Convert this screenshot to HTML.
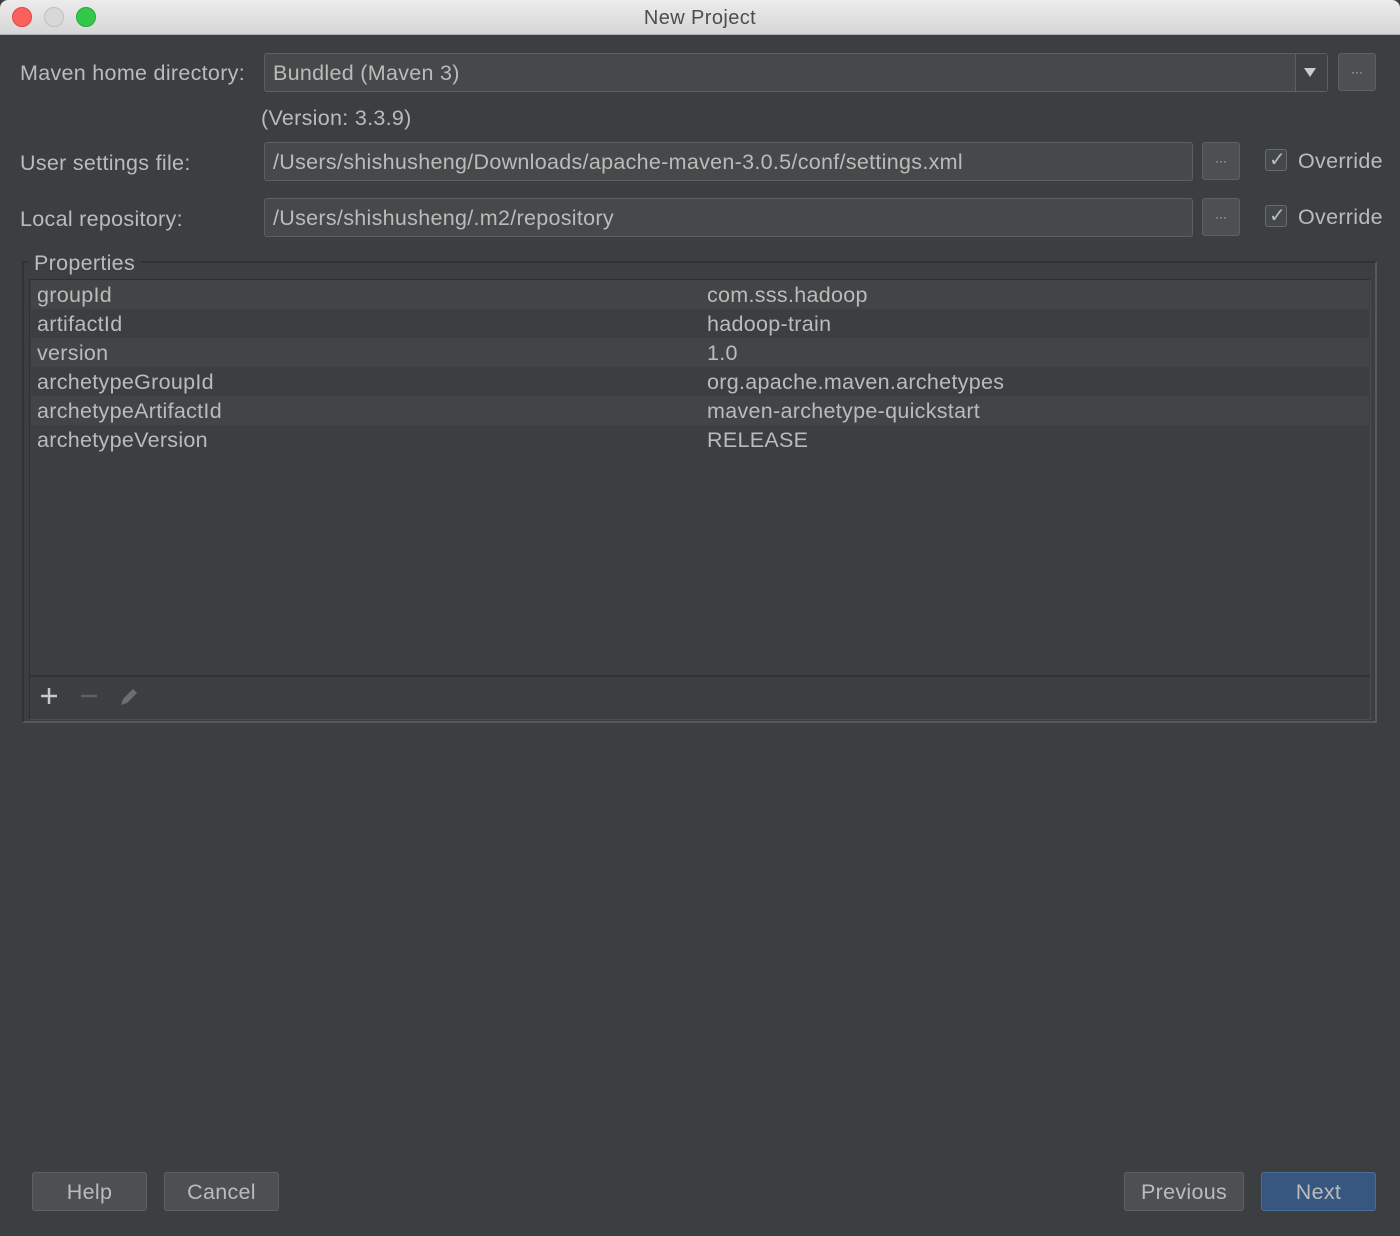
<!DOCTYPE html>
<html><head><style>
*{box-sizing:border-box;margin:0;padding:0}
body{width:1400px;height:1236px;background:#3c3f41;font-family:"Liberation Sans",sans-serif;color:#bbbbbb;position:relative;overflow:hidden;font-size:21.5px;letter-spacing:0.3px}
.abs{position:absolute}
.title{left:0;top:0;width:1400px;height:35px;background:linear-gradient(#ececec,#d6d6d6);border-bottom:1px solid #b0b0b0;color:#4d4d4d;text-align:center;line-height:37px;font-size:20px;border-radius:8px 8px 0 0;letter-spacing:0.4px}
.dot{width:20px;height:20px;border-radius:50%;top:7px}
.field{background:#45494a;border:1px solid #5e6060;border-radius:3px;height:39px;line-height:39px;padding-left:8px;color:#bbbbbb}
.btn{background:#4c5052;border:1px solid #5e6060;border-radius:3px;text-align:center;color:#bbbbbb}
.ell{width:38px;height:38px;line-height:36px;font-size:12px;letter-spacing:0}
.cb{width:22px;height:22px;border:1px solid #6b6b6b;border-radius:3px;background:#43494a}
.row{left:31px;width:1338px;height:29px;line-height:30px;padding-left:6px}
.row span{position:absolute;left:676px}
</style></head><body>
<div class="abs title">New Project</div>
<div class="abs dot" style="left:12px;background:#fc605c;border:1px solid #de4a46"></div>
<div class="abs dot" style="left:44px;background:#d8d8d8;border:1px solid #c0c0c0"></div>
<div class="abs dot" style="left:76px;background:#34c84a;border:1px solid #2aa83c"></div>

<div class="abs" style="left:20px;top:61px">Maven home directory:</div>
<div class="abs field" style="left:264px;top:53px;width:1064px">Bundled (Maven 3)</div>
<div class="abs" style="left:1295px;top:54px;width:32px;height:37px;border-left:1px solid #5e6060;background:#3f4244"></div>
<div class="abs" style="left:1304px;top:68px;width:0;height:0;border-left:6px solid transparent;border-right:6px solid transparent;border-top:9px solid #ccc"></div>
<div class="abs btn ell" style="left:1338px;top:53px">···</div>
<div class="abs" style="left:261px;top:106px">(Version: 3.3.9)</div>

<div class="abs" style="left:20px;top:151px">User settings file:</div>
<div class="abs field" style="left:264px;top:142px;width:929px">/Users/shishusheng/Downloads/apache-maven-3.0.5/conf/settings.xml</div>
<div class="abs btn ell" style="left:1202px;top:142px">···</div>
<div class="abs cb" style="left:1265px;top:149px"></div>
<div class="abs" style="left:1269px;top:147px;color:#bbb;font-size:20px">✓</div>
<div class="abs" style="left:1298px;top:149px;font-size:21.5px">Override</div>

<div class="abs" style="left:20px;top:207px">Local repository:</div>
<div class="abs field" style="left:264px;top:198px;width:929px">/Users/shishusheng/.m2/repository</div>
<div class="abs btn ell" style="left:1202px;top:198px">···</div>
<div class="abs cb" style="left:1265px;top:205px"></div>
<div class="abs" style="left:1269px;top:203px;color:#bbb;font-size:20px">✓</div>
<div class="abs" style="left:1298px;top:205px;font-size:21.5px">Override</div>

<div class="abs" style="left:22px;top:261px;width:1355px;height:462px;border:2px solid #2f3233;border-right-color:#55595a;border-bottom-color:#55595a"></div>
<div class="abs" style="left:29px;top:279px;width:1342px;height:441px;border:1px solid #2d3031;border-right-color:#4a4e50;border-bottom-color:#4a4e50"></div>
<div class="abs" style="left:28px;top:251px;padding:0 6px;background:#3c3f41">Properties</div>
<div class="abs row" style="top:280px;background:#414546">groupId<span>com.sss.hadoop</span></div>
<div class="abs row" style="top:309px">artifactId<span>hadoop-train</span></div>
<div class="abs row" style="top:338px;background:#414546">version<span>1.0</span></div>
<div class="abs row" style="top:367px">archetypeGroupId<span>org.apache.maven.archetypes</span></div>
<div class="abs row" style="top:396px;background:#414546">archetypeArtifactId<span>maven-archetype-quickstart</span></div>
<div class="abs row" style="top:425px">archetypeVersion<span>RELEASE</span></div>
<div class="abs" style="left:30px;top:675px;width:1340px;height:2px;background:#323536"></div>
<svg class="abs" style="left:38px;top:684px" width="110" height="26">
<path d="M11 4v16M3 12h16" stroke="#c8c8c8" stroke-width="2.5"/>
<path d="M43 12h16" stroke="#5e6262" stroke-width="2.5"/>
<path d="M83 21l2-6 10-10 4 4-10 10z" fill="#6b6f70"/>
</svg>

<div class="abs btn" style="left:32px;top:1172px;width:115px;height:39px;line-height:39px">Help</div>
<div class="abs btn" style="left:164px;top:1172px;width:115px;height:39px;line-height:39px">Cancel</div>
<div class="abs btn" style="left:1124px;top:1172px;width:120px;height:39px;line-height:39px">Previous</div>
<div class="abs btn" style="left:1261px;top:1172px;width:115px;height:39px;line-height:39px;background:#365880;border-color:#4a6d96">Next</div>
</body></html>
